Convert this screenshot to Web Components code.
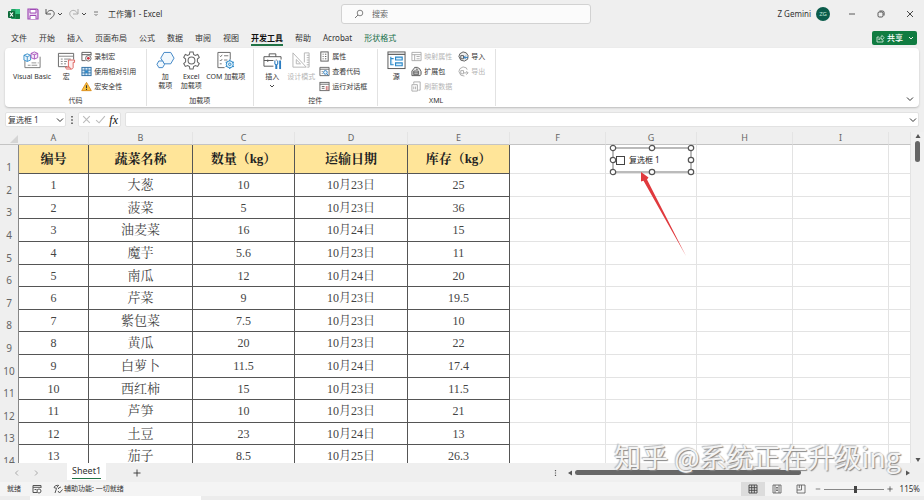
<!DOCTYPE html>
<html lang="zh-CN">
<head>
<meta charset="utf-8">
<meta name="viewport" content="width=device-width, initial-scale=1">
<title>工作簿1 - Excel</title>
<style>
  html, body { margin: 0; height: 100%; }
  body {
    font: 8px/12px "Noto Sans", "Noto Sans CJK SC", sans-serif;
    color: #333;
    background: #efefef;
  }
</style>
</head>
<body>
<excel-app></excel-app>

<script>
const ICONS = {
  excel: ['0 0 12 12', `<rect x="3" y="1" width="9" height="10" rx="1" fill="#21a366"/><path d="M7.500 1h3.500a1 1 0 0 1 1 1v4H7.500z" fill="#33c481"/><path d="M7.500 6H12v4a1 1 0 0 1-1 1H7.500z" fill="#107c41"/><rect y="3" width="7" height="7" rx="1" fill="#0b6a38"/><path d="M2 4.500l3 4M5 4.500l-3 4" stroke="#fff" stroke-width="1.200"/>`],
  save: ['0 0 12 12', `<path d="M1 1h9l1 1v9H1z" fill="#ead6ef" stroke="#a04bb5" stroke-width="1.200"/><path d="M3 1.500h6v3.500H3z" fill="#fff" stroke="#a04bb5"/><path d="M3 11V7.500h6V11" fill="#fff" stroke="#a04bb5"/>`],
  undo: ['0 0 12 12', `<path d="M2 1v5h5M2.300 5.700C4 2.500 6.500 1.800 8.500 2.800s2.400 3.700.5 5.500L6 11.300" stroke="#555"/>`],
  redo: ['0 0 12 12', `<path d="M10 1v5H5M9.700 5.700C8 2.500 5.500 1.800 3.500 2.800s-2.400 3.700-.5 5.500L6 11.300" stroke="#aaa"/>`],
  caret: ['0 0 6 6', `<path d="M1 2l2 2 2-2" stroke="currentColor" stroke-width=".9"/>`],
  chevron: ['0 0 8 8', `<path d="M1 2.500l3 3 3-3" stroke="currentColor"/>`],
  customize: ['0 0 6 6', `<path d="M1 1h4M1.500 3L3 4.500 4.500 3" stroke="#555" stroke-width=".8"/>`],
  search: ['0 0 10 10', `<circle cx="6" cy="4" r="2.800" stroke="#666" stroke-width=".8"/><path d="M4 6L1 9" stroke="#666" stroke-width=".9"/>`],
  minimize: ['0 0 8 8', `<path d="M1 4h6" stroke="#333" stroke-width=".8"/>`],
  restore: ['0 0 8 8', `<rect x="1" y="2" width="5" height="5" rx="1.200" stroke="#333" stroke-width=".8"/><path d="M2.500 1H5.500a1.600 1.600 0 0 1 1.600 1.600V5.500" stroke="#333" stroke-width=".8"/>`],
  close: ['0 0 8 8', `<path d="M1 1l6 6M7 1L1 7" stroke="currentColor" stroke-width=".9"/>`],
  share: ['0 0 9 9', `<path d="M3 3H1v5h6V6" stroke="#fff" stroke-width=".7"/><path d="M2.800 6c0-2 1-3 3-3V1.300L8.300 3.700 5.800 6V4.500c-1.500 0-2.300.4-3 1.500z" stroke="#fff" stroke-width=".6"/>`],
  vb: ['0 0 20 20', `<path d="M2 10v7.500h16V6M13 3h-1" stroke="#777"/><path d="M5 15h3M9 15h6M9 12.500h5M15.500 12.500h1" stroke="#777" stroke-width=".8"/><path d="M1 4.500L4.500 3 8 4.500v5L4.500 11 1 9.500zM1 4.500L4.500 6 8 4.500M4.500 6v5" fill="#e9f4fb" stroke="#2b88c8" stroke-width=".9"/><path d="M8.500 2.500L12 1l3.500 1.500V7L12 8.500 8.500 7zM8.500 2.500L12 4l3.500-1.500M12 4v4.500" fill="#f7eafa" stroke="#a24bb8" stroke-width=".9"/>`],
  macro: ['0 0 20 20', `<path d="M11 16.500H1.500v-14h16V9" stroke="#666"/><path d="M2 5.500h15M4 8.500h2M7.500 8.500h7M4 11h2M7.500 11h3M4 13.500h2M7.500 13.500h2" stroke="#777" stroke-width=".9"/><path d="M12 17V9.500h6.500V12H17v5.500c0 1-1.500 1.500-2 1.500h-4.500c-1 0-1.500-1-1.500-2h4.500c0 1 .5 2 1.500 2" fill="#fdeeee" stroke="#d9534f" stroke-width=".9"/>`],
  record: ['0 0 12 12', `<path d="M5 10.500H1v-9h10V5M1 4h10" stroke="#555"/><circle cx="8" cy="8" r="3" fill="#fff" stroke="#555" stroke-width=".9"/><circle cx="8" cy="8" r="1.500" fill="#c9303e"/>`],
  relative: ['0 0 12 12', `<rect x="1" y="1.500" width="10" height="9" fill="#d6eaf8" stroke="#2b6ca3"/><path d="M1 4.500h10M1 7.500h10M4.300 1.500v9M7.600 1.500v9" stroke="#2b6ca3" stroke-width=".9"/><rect x="4.500" y="5" width="3" height="2.500" fill="#2b88c8"/>`],
  warning: ['0 0 12 12', `<path d="M6 1.500L11.200 10.500H.8z" fill="#f9c23c" stroke="#d98b1a"/><path d="M6 4.500v3M6 8.500v1.200" stroke="#333" stroke-width="1.200"/>`],
  addin: ['0 0 20 20', `<path d="M8.500 1.500h7L19 7.500 15.500 13.500h-7L5 7.500z" stroke="#3c83c4" fill="#f1f8fd"/><path d="M3 10.500h4l2 3.500-2 3.500H3L1 14z" stroke="#3c83c4" fill="#f1f8fd"/>`],
  gear: ['0 0 20 20', `<path d="M8.300 1h3.400l.5 2.600 1.800 1 2.500-.9 1.700 3-2 1.800v2.900l2 1.800-1.700 3-2.500-.9-1.800 1-.5 2.700H8.300l-.5-2.700-1.800-1-2.500.9-1.700-3 2-1.800V8.500l-2-1.800 1.700-3 2.500.9 1.800-1z" stroke="#666" stroke-width="1.100"/><circle cx="10" cy="10" r="3.600" stroke="#666" stroke-width="1.100"/>`],
  com: ['0 0 20 20', `<path d="M9 17.500H2v-16h13V9" stroke="#666"/><path d="M4 5l1 1 1.500-2M4 9.500l1 1 1.500-2M4 13.500h2M8.500 5H13M8.500 9.500H12" stroke="#666" stroke-width=".9"/><circle cx="14.500" cy="14" r="3.700" stroke="#2b88c8" fill="#e4f3fb"/><circle cx="14.500" cy="14" r="1.300" stroke="#2b88c8"/><path d="M14.500 9v1.500M14.500 17.500V19M10.200 11.500l1.200.7M17.600 15.800l1.200.7M10.200 16.500l1.200-.7M17.600 12.200l1.200-.7" stroke="#2b88c8" stroke-width="1.200"/>`],
  toolbox: ['0 0 20 20', `<path d="M11 16H1V6h18v3M1 10h10M6.500 6V3h7v3M5 9v2.500M14 9v1" stroke="#555"/><path d="M12.500 10v3.500l1 1V19M15.500 10v3.500l-1 1V19" stroke="#2b7cc0" stroke-width="1.100"/><path d="M18 10v9" stroke="#2b7cc0" stroke-width="2"/>`],
  design: ['0 0 20 20', `<path d="M1 2v15h14zM4.500 9v4.500h4.500z" stroke="#b5b5b5"/><path d="M13 2h5v15h-2M13 2v10M15.500 4.500H18M15.500 7H18M15.500 9.500H18M15.500 12H18M15.500 14.500H18" stroke="#b5b5b5"/>`],
  property: ['0 0 12 12', `<rect x="2" y="1" width="8" height="10" stroke="#555"/><path d="M4 3.500h1M6.500 3.500H8M4 6h1M6.500 6H8M4 8.500h1M6.500 8.500H8" stroke="#555"/>`],
  viewcode: ['0 0 12 12', `<path d="M1 1.500h10v9H1z" stroke="#555" stroke-width=".9"/><path d="M1 3.500h10M3 6h1M3 8h1" stroke="#555" stroke-width=".9"/><circle cx="7" cy="7" r="2" fill="#e7f4fc" stroke="#2b7cc0"/><path d="M8.500 8.500l2 2" stroke="#2b7cc0"/>`],
  dialog: ['0 0 12 12', `<rect x="1" y="1.500" width="10" height="9" stroke="#666"/><path d="M1 3.500h10M3 6h3M3 8h3" stroke="#666"/><path d="M8 5.500V10M9.800 5.500V10" stroke="#c66"/>`],
  source: ['0 0 20 20', `<rect x="1" y="1" width="18" height="17.500" stroke="#555" fill="#fff"/><path d="M1 3.500h18" stroke="#555" stroke-width="1.200"/><path d="M4 6v8.500h3M4 8h3M9 6.500h7v3H9zM9 12.500h7v3H9z" stroke="#2b88c8" stroke-width="1.200" fill="#d9eefb"/>`],
  map: ['0 0 12 12', `<path d="M1 1.500h10v9H1zM1 4h10M4 4v6.500M6 6h3.500M6 8.500h3.500" stroke="#aaa"/>`],
  pack: ['0 0 12 12', `<path d="M1 5.500L3 3l1-1.500h3L9.500 3 11 6v3l-1 1.500H1z" stroke="#555" fill="#e4e4e4"/><path d="M3 5.500h5v4H3zM3 7.500h5M5.500 3.500h2" stroke="#555"/>`],
  refresh: ['0 0 12 12', `<path d="M3 3V1h7v9H8M1 4h6v7H1zM3 6v3M5 6v3" stroke="#aaa"/>`],
  importer: ['0 0 12 12', `<path d="M1 6l1-3 3.500-2L9 2l2 3-.5 4L7 11l-4-1z" stroke="#555" fill="#eee"/><path d="M3 5h3v3.500H3z" stroke="#555"/><path d="M11 7H6.500M8.500 5l-2 2 2 2" stroke="#2b7cc0"/>`],
  exporter: ['0 0 12 12', `<path d="M10 4L9 2 5.500 1 2 3 1 6l2 4 4 1M3 5h3v3.500H3zM6.500 7.500H11M9 5.500l2 2-2 2" stroke="#aaa"/>`],
  check: ['0 0 10 10', `<path d="M1 5.500L3.700 8 9 2" stroke="#bbb"/>`],
  cancel: ['0 0 10 10', `<path d="M2 2l6 6M8 2L2 8" stroke="#bbb"/>`],
  dots: ['0 0 4 10', `<path d="M1.200 1h1.600v1.600H1.200zM1.200 4.200h1.600v1.600H1.200zM1.200 7.400h1.600V9H1.200z" fill="#555"/>`],
  prev: ['0 0 8 8', `<path d="M5 1.500L2.500 4 5 6.500" stroke="#aaa"/>`],
  next: ['0 0 8 8', `<path d="M3 1.500L5.500 4 3 6.500" stroke="#aaa"/>`],
  plus: ['0 0 8 8', `<path d="M4 .5v7M.5 4h7" stroke="currentColor" stroke-width=".9"/>`],
  up: ['0 0 6 6', `<path d="M3 1l2.500 4h-5z" fill="#555"/>`],
  down: ['0 0 6 6', `<path d="M3 5l2.500-4h-5z" fill="#555"/>`],
  left: ['0 0 6 6', `<path d="M1 3l4-2.500v5z" fill="#555"/>`],
  right: ['0 0 6 6', `<path d="M5 3L1 .5v5z" fill="#555"/>`],
  recorder: ['0 0 10 10', `<path d="M5 8.500H1v-7h8V4M1 3.300h8M2.500 5.500h2" stroke="#555"/><circle cx="7" cy="7" r="2" fill="#fff" stroke="#555"/>`],
  access: ['0 0 10 10', `<path d="M1 3.500C1 2 4 .8 6 1.500M1 3.500L3.500 4.500 2 9M8 3L5.500 4v1M4 3.500L4.800 2M5 7l1.500 2L9.500 5.500" stroke="#444" stroke-width=".9"/>`],
  normal: ['0 0 10 10', `<path d="M1 1h8v8H1zM1 3.700h8M1 6.300h8M3.700 1v8M6.300 1v8" stroke="#444" stroke-width=".9"/>`],
  page: ['0 0 10 10', `<path d="M1 1h8v8H1zM3 1v8M7 1v8M4 3.500h2M4 5h2M4 6.500h2" stroke="#555" stroke-width=".8"/>`],
  break: ['0 0 10 10', `<path d="M1 1h8v8H1zM1 6h4.500V1M3.300 1v3" stroke="#555" stroke-width=".8"/>`]
};

const BUTTON_RESET = `
  button {
    display: flex; align-items: center; justify-content: center;
    margin: 0; padding: 0; border: 0; background: none;
    font: inherit; color: inherit; white-space: nowrap;
  }
`;

// small helper so every element sets up its shadow root the same way
function define(name, render) {
  customElements.define(name, class extends HTMLElement {
    connectedCallback() {
      if (this.shadowRoot) return;
      this.attachShadow({ mode: 'open' });
      this.shadowRoot.innerHTML = render(this);
    }
  });
}

define('x-icon', (el) => {
  const [box, body] = ICONS[el.getAttribute('name')];
  const size = Number(el.getAttribute('size') || 10);
  const [, , w, h] = box.split(' ').map(Number);
  return `
    <style>
      :host { display: block; flex: none; }
      svg { display: block; }
    </style>
    <svg width="${Math.round(size * w / h)}" height="${size}" viewBox="${box}" fill="none" aria-hidden="true">${body}</svg>
  `;
});

define('title-bar', () => `
  <style>
    :host {
      display: grid;
      grid-template-columns: 1fr 250px 1fr;
      align-items: center;
      height: 28px;
      padding-left: 8px;
    }
    ${BUTTON_RESET}
    .quick { display: flex; align-items: center; gap: 1px; }
    .quick .save { margin: 0 4px 0 6px; }
    .quick .redo { margin-left: 4px; }
    .quick .more { margin: 0 8px 0 5px; }
    .search {
      display: flex; align-items: center; gap: 8px;
      box-sizing: border-box; height: 20px; padding: 0 12px;
      background: #fbfbfb; border: 1px solid #d2d2d2; border-radius: 3px;
    }
    input { flex: 1; min-width: 0; padding: 0; border: 0; background: none; font: inherit; outline: 0; }
    input::placeholder { color: #666; opacity: 1; }
    .window { display: flex; align-items: center; justify-content: flex-end; gap: 21px; padding-right: 10px; }
    .user { display: flex; align-items: center; gap: 5px; margin-right: -3px; }
    .avatar {
      width: 14px; height: 14px; border-radius: 50%;
      background: #0b5c4b; color: #b9e3d6; font-size: 6px; line-height: 14px; text-align: center;
    }
  </style>
  <div class="quick">
    <x-icon name="excel" size="12"></x-icon>
    <button class="save" aria-label="保存"><x-icon name="save" size="12"></x-icon></button>
    <button aria-label="撤消"><x-icon name="undo" size="12"></x-icon></button>
    <button aria-label="撤消选项"><x-icon name="caret" size="6"></x-icon></button>
    <button class="redo" aria-label="恢复"><x-icon name="redo" size="12"></x-icon></button>
    <button aria-label="恢复选项"><x-icon name="caret" size="6"></x-icon></button>
    <button class="more" aria-label="自定义"><x-icon name="customize" size="6"></x-icon></button>
    <span>工作簿1 - Excel</span>
  </div>
  <label class="search"><x-icon name="search"></x-icon><input type="search" placeholder="搜索" aria-label="搜索"></label>
  <div class="window">
    <div class="user"><span>Z Gemini</span><span class="avatar">ZG</span></div>
    <button aria-label="最小化"><x-icon name="minimize" size="8"></x-icon></button>
    <button aria-label="还原"><x-icon name="restore" size="8"></x-icon></button>
    <button aria-label="关闭"><x-icon name="close" size="8"></x-icon></button>
  </div>
`);

const TABS = ['文件', '开始', '插入', '页面布局', '公式', '数据', '审阅', '视图', '开发工具', '帮助', 'Acrobat', '形状格式'];

define('ribbon-tabs', () => `
  <style>
    :host { display: flex; align-items: center; justify-content: space-between; height: 20px; padding: 0 7px 0 5px; }
    ${BUTTON_RESET}
    nav { display: flex; }
    nav button { padding: 3px 6px 1px; }
    span { border-bottom: 2px solid transparent; }
    .active { font-weight: 700; color: #111; }
    .active span { border-color: #217346; }
    .context { color: #17704a; }
    .share {
      gap: 2px; height: 14px; padding: 0 3px 0 4px; border-radius: 2px;
      background: #107c41; color: #fff; font-weight: 500;
    }
    .share x-icon:last-child { margin-left: 3px; }
  </style>
  <nav>
    ${TABS.map((t) => `<button class="${t === '开发工具' ? 'active' : t === '形状格式' ? 'context' : ''}"><span>${t}</span></button>`).join('')}
  </nav>
  <button class="share"><x-icon name="share" size="9"></x-icon>共享<x-icon name="caret" size="6"></x-icon></button>
`);

define('ribbon-group', (el) => `
  <style>
    :host {
      display: flex; flex-direction: column; justify-content: space-between;
      padding: 0 8px 0 7px; border-right: 1px solid #e2e2e2;
    }
    .items { display: flex; align-items: flex-start; gap: 4px; }
    .label { text-align: center; line-height: 10px; }
  </style>
  <div class="items"><slot></slot></div>
  <div class="label">${el.getAttribute('label')}</div>
`);

define('ribbon-column', () => `
  <style>
    :host { display: flex; flex-direction: column; align-items: flex-start; margin-right: 2px; }
  </style>
  <slot></slot>
`);

// "large" puts the icon over the text, otherwise it sits beside it
define('ribbon-button', (el) => {
  const large = el.hasAttribute('large');
  return `
    <style>
      :host { display: block; }
      :host([disabled]) { color: #b5b5b5; }
      ${BUTTON_RESET}
      button { gap: 2px; height: 15px; line-height: 9px; }
      .large { flex-direction: column; justify-content: flex-start; min-width: 22px; height: auto; padding-top: 2px; gap: 2px; }
    </style>
    <button class="${large ? 'large' : ''}" ${el.hasAttribute('disabled') ? 'disabled' : ''}>
      <x-icon name="${el.getAttribute('icon')}" size="${large ? 19 : 11}"></x-icon>
      <span><slot></slot></span>
      ${el.hasAttribute('menu') ? '<x-icon name="caret" size="6"></x-icon>' : ''}
    </button>
  `;
});

define('ribbon-panel', () => `
  <style>
    :host {
      display: flex; box-sizing: border-box; height: 59px; margin: 0 5px; padding: 1px;
      background: #fff; border-radius: 4px; box-shadow: 0 1px 2px #bbb;
      font-size: 7px; line-height: 9px;
    }
    ${BUTTON_RESET}
    .collapse { margin-left: auto; padding: 0 4px; align-self: flex-end; height: 14px; }
  </style>
  <ribbon-group label="代码">
    <ribbon-button large icon="vb">Visual Basic</ribbon-button>
    <ribbon-button large icon="macro">宏</ribbon-button>
    <ribbon-column>
      <ribbon-button icon="record">录制宏</ribbon-button>
      <ribbon-button icon="relative">使用相对引用</ribbon-button>
      <ribbon-button icon="warning">宏安全性</ribbon-button>
    </ribbon-column>
  </ribbon-group>
  <ribbon-group label="加载项">
    <ribbon-button large icon="addin">加<br>载项</ribbon-button>
    <ribbon-button large icon="gear">Excel<br>加载项</ribbon-button>
    <ribbon-button large icon="com">COM 加载项</ribbon-button>
  </ribbon-group>
  <ribbon-group label="控件">
    <ribbon-button large icon="toolbox" menu>插入</ribbon-button>
    <ribbon-button large icon="design" disabled>设计模式</ribbon-button>
    <ribbon-column>
      <ribbon-button icon="property">属性</ribbon-button>
      <ribbon-button icon="viewcode">查看代码</ribbon-button>
      <ribbon-button icon="dialog">运行对话框</ribbon-button>
    </ribbon-column>
  </ribbon-group>
  <ribbon-group label="XML">
    <ribbon-button large icon="source">源</ribbon-button>
    <ribbon-column>
      <ribbon-button icon="map" disabled>映射属性</ribbon-button>
      <ribbon-button icon="pack">扩展包</ribbon-button>
      <ribbon-button icon="refresh" disabled>刷新数据</ribbon-button>
    </ribbon-column>
    <ribbon-column>
      <ribbon-button icon="importer">导入</ribbon-button>
      <ribbon-button icon="exporter" disabled>导出</ribbon-button>
    </ribbon-column>
  </ribbon-group>
  <button class="collapse" aria-label="折叠功能区"><x-icon name="chevron" size="8"></x-icon></button>
`);

define('formula-bar', () => `
  <style>
    :host { display: flex; align-items: center; gap: 4px; height: 15px; margin: 5px; }
    ${BUTTON_RESET}
    .box { display: flex; align-items: center; box-sizing: border-box; height: 15px; background: #fff; border: 1px solid #e2e2e2; border-radius: 2px; }
    .name { width: 61px; padding: 0 1px 0 2px; }
    .tools { justify-content: space-between; width: 43px; padding: 0 2px; }
    .formula { flex: 1; padding-right: 1px; }
    input { flex: 1; min-width: 0; padding: 0; border: 0; background: none; font: inherit; color: inherit; outline: 0; }
    .fx { font: italic 12px/12px "Liberation Serif", serif; color: #111; }
  </style>
  <div class="box name"><input value="复选框 1" aria-label="名称框"><button aria-label="名称列表"><x-icon name="chevron" size="8"></x-icon></button></div>
  <x-icon name="dots" size="10"></x-icon>
  <div class="box tools">
    <button aria-label="取消"><x-icon name="cancel" size="11"></x-icon></button>
    <button aria-label="输入"><x-icon name="check" size="11"></x-icon></button>
    <button class="fx">fx</button>
  </div>
  <div class="box formula"><input aria-label="编辑栏"><button aria-label="展开编辑栏"><x-icon name="chevron" size="8"></x-icon></button></div>
`);

const COLUMNS = [['A', 70], ['B', 104], ['C', 102], ['D', 113], ['E', 102], ['F', 96], ['G', 91], ['H', 96], ['I', 96]];
const ROWS = [
  ['编号', '蔬菜名称', '数量（kg）', '运输日期', '库存（kg）'],
  ['1', '大葱', '10', '10月23日', '25'],
  ['2', '菠菜', '5', '10月23日', '36'],
  ['3', '油麦菜', '16', '10月24日', '15'],
  ['4', '魔芋', '5.6', '10月23日', '11'],
  ['5', '南瓜', '12', '10月24日', '20'],
  ['6', '芹菜', '9', '10月23日', '19.5'],
  ['7', '紫包菜', '7.5', '10月23日', '10'],
  ['8', '黄瓜', '20', '10月23日', '22'],
  ['9', '白萝卜', '11.5', '10月24日', '17.4'],
  ['10', '西红柿', '15', '10月23日', '11.5'],
  ['11', '芦笋', '10', '10月23日', '21'],
  ['12', '土豆', '23', '10月24日', '13'],
  ['13', '茄子', '8.5', '10月25日', '26.3']
];

define('sheet-grid', () => {
  const row = (cells, i) => `
    <tr><th scope="row">${i + 1}</th>${cells.map((c) => `<td class="data">${c}</td>`).join('')}${'<td></td>'.repeat(5)}</tr>`;
  return `
    <style>
      :host { display: block; position: relative; overflow: hidden; background: #fff; }
      table { width: 100%; table-layout: fixed; border-collapse: separate; border-spacing: 0; }
      th, td { box-sizing: border-box; padding: 0; text-align: center; white-space: nowrap; }
      thead th {
        height: 13px; font-size: 9px; line-height: 12px; font-weight: 400; color: #666;
        background: #efefef; border-right: 1px solid #e4e4e4; border-bottom: 1px solid #c4c4c4;
      }
      thead th:first-child { border-right: 0; }
      .corner { width: 0; margin: 2px 1px 1px auto; border-left: 8px solid transparent; border-bottom: 8px solid #d5d5d5; }
      tbody th {
        padding-bottom: 1px; font-size: 10px; line-height: 11px; font-weight: 400; color: #666;
        vertical-align: bottom; background: #efefef; border-right: 1px solid #888;
      }
      td { border-right: 1px solid #e3e3e3; border-bottom: 1px solid #e3e3e3; }
      .data {
        border-color: #555; color: #444;
        font: 12px/18px "Liberation Serif", "Noto Serif CJK SC", "Noto Sans CJK SC", serif;
      }
      .data:nth-child(3) { font-size: 13px; }
      /* the row pitch averages a little under 23px */
      tbody tr > * { height: 23px; }
      tbody tr:nth-child(5n + 1) > *, tbody tr:nth-child(5n + 3) > * { height: 22px; }
      tbody tr:first-child > * { height: 29px; }
      tr:first-child .data { background: #ffe599; color: #222; font-size: 13px; font-weight: 700; }
    </style>
    <table>
      <colgroup><col style="width: 19px">${COLUMNS.map(([, w]) => `<col style="width: ${w}px">`).join('')}<col></colgroup>
      <thead><tr><th><div class="corner"></div></th>${COLUMNS.map(([c]) => `<th scope="col">${c}</th>`).join('')}<th></th></tr></thead>
      <tbody>${ROWS.map(row).join('')}</tbody>
    </table>
    <slot></slot>
  `;
});

define('form-checkbox', () => {
  const handles = [[4, 4], [43, 4], [82, 4], [4, 16], [82, 16], [4, 28], [43, 28], [82, 28]];
  return `
    <style>
      :host { display: block; position: absolute; width: 86px; height: 32px; }
      svg { position: absolute; inset: 0; pointer-events: none; }
      label { display: flex; align-items: center; gap: 4px; height: 32px; padding-left: 7px; color: #222; }
      input { appearance: none; box-sizing: border-box; width: 9px; height: 9px; margin: 0; border: 1px solid #444; background: #fff; }
    </style>
    <label><input type="checkbox">复选框 1</label>
    <svg width="86" height="32" fill="none" stroke="#555">
      <rect x="4" y="4" width="78" height="24" stroke-width=".8"/>
      ${handles.map(([x, y]) => `<circle cx="${x}" cy="${y}" r="2.700" fill="#fff" stroke-width="1.200"/>`).join('')}
    </svg>
  `;
});

define('pointer-arrow', () => `
  <style>
    :host { display: block; position: absolute; }
    svg { display: block; }
  </style>
  <svg width="46" height="85" viewBox="0 0 46 85" aria-hidden="true">
    <path d="M1 0L8.500 5.500 7 7.500 46 84 3.500 8.800 1 9.500z" fill="#e03a3e"/>
  </svg>
`);

define('v-scroll', () => `
  <style>
    :host { display: flex; flex-direction: column; align-items: center; box-sizing: border-box; width: 13px; padding: 1px 0 0; background: #f1f1f1; }
    ${BUTTON_RESET}
    .thumb { width: 5px; height: 21px; margin: 2px 0 auto; border-radius: 3px; background: #666; }
  </style>
  <button aria-label="向上滚动"><x-icon name="up" size="6"></x-icon></button>
  <div class="thumb"></div>
  <button aria-label="向下滚动"><x-icon name="down" size="6"></x-icon></button>
`);

define('sheet-tabs', () => `
  <style>
    :host { display: flex; align-items: center; justify-content: space-between; height: 19px; padding: 0 13px; background: #efefef; }
    ${BUTTON_RESET}
    .tabs, .scroll { display: flex; align-items: center; }
    .tabs { gap: 11px; }
    .sheet { height: 17px; margin: 0 16px 2px; padding: 0 5px; background: #fff; font-size: 9px; }
    .sheet span { line-height: 14px; border-bottom: 1px solid #217346; }
    .scroll { gap: 2px; width: 40%; }
    .scroll > x-icon { margin: 0 8px 0 2px; }
    .track { flex: 1; }
    .thumb { width: 69%; height: 5px; border-radius: 3px; background: #666; }
  </style>
  <div class="tabs">
    <button aria-label="上一个工作表"><x-icon name="prev" size="8"></x-icon></button>
    <button aria-label="下一个工作表"><x-icon name="next" size="8"></x-icon></button>
    <button class="sheet"><span>Sheet1</span></button>
    <button aria-label="新建工作表"><x-icon name="plus" size="8"></x-icon></button>
  </div>
  <div class="scroll">
    <x-icon name="dots" size="8"></x-icon>
    <button aria-label="向左滚动"><x-icon name="left" size="6"></x-icon></button>
    <div class="track"><div class="thumb"></div></div>
    <button aria-label="向右滚动"><x-icon name="right" size="6"></x-icon></button>
  </div>
`);

define('status-bar', () => `
  <style>
    :host { display: flex; align-items: center; justify-content: space-between; height: 14px; padding: 0 4px 0 7px; background: #f4f4f4; font-size: 7px; }
    ${BUTTON_RESET}
    div { display: flex; align-items: center; }
    .left { gap: 11px; }
    .left button { gap: 1px; }
    .views button { width: 24px; height: 14px; }
    .views .on { background: #dcdcdc; }
    .zoom { gap: 2px; padding-left: 2px; }
    .zoom span { margin-left: 5px; font-size: 8px; }
    input { appearance: none; width: 60px; height: 10px; margin: 0 1px; background: linear-gradient(#888, #888) center / 100% 1px no-repeat; }
    input::-webkit-slider-thumb { appearance: none; width: 3px; height: 7px; background: #444; }
  </style>
  <div class="left">
    <span>就绪</span>
    <button aria-label="录制宏"><x-icon name="recorder"></x-icon></button>
    <button><x-icon name="access"></x-icon>辅助功能: 一切就绪</button>
  </div>
  <div>
    <div class="views">
      <button class="on" aria-label="普通"><x-icon name="normal"></x-icon></button>
      <button aria-label="页面布局"><x-icon name="page"></x-icon></button>
      <button aria-label="分页预览"><x-icon name="break"></x-icon></button>
    </div>
    <div class="zoom">
      <button aria-label="缩小"><x-icon name="minimize" size="6"></x-icon></button>
      <input type="range" min="10" max="200" value="110" aria-label="缩放">
      <button aria-label="放大"><x-icon name="plus" size="6"></x-icon></button>
      <span>115%</span>
    </div>
  </div>
`);

define('excel-app', () => `
  <style>
    :host { display: flex; flex-direction: column; position: relative; height: 100vh; overflow: hidden; }
    .sheet { display: flex; flex: 1; min-height: 0; }
    sheet-grid { flex: 1; min-width: 0; }
    form-checkbox { left: 609px; top: 12px; }
    pointer-arrow { left: 640px; top: 40px; }
    .desktop { height: 4px; background: #ececec; }
    .desktop div { width: 171px; height: 4px; margin-left: 30px; background: #fff; }
    .watermark {
      position: absolute; right: 23px; bottom: 26px;
      font: 27px/34px "Noto Sans CJK SC", sans-serif; color: #f4f4f4;
      text-shadow: 1px 1px 1px #888, -1px -1px 1px #bbb;
      white-space: nowrap; pointer-events: none;
    }
  </style>
  <title-bar></title-bar>
  <ribbon-tabs></ribbon-tabs>
  <ribbon-panel></ribbon-panel>
  <formula-bar></formula-bar>
  <div class="sheet">
    <sheet-grid>
      <form-checkbox></form-checkbox>
      <pointer-arrow></pointer-arrow>
    </sheet-grid>
    <v-scroll></v-scroll>
  </div>
  <sheet-tabs></sheet-tabs>
  <status-bar></status-bar>
  <div class="desktop"><div></div></div>
  <div class="watermark">知乎 @系统正在升级ing</div>
`);
</script>
</body>
</html>
